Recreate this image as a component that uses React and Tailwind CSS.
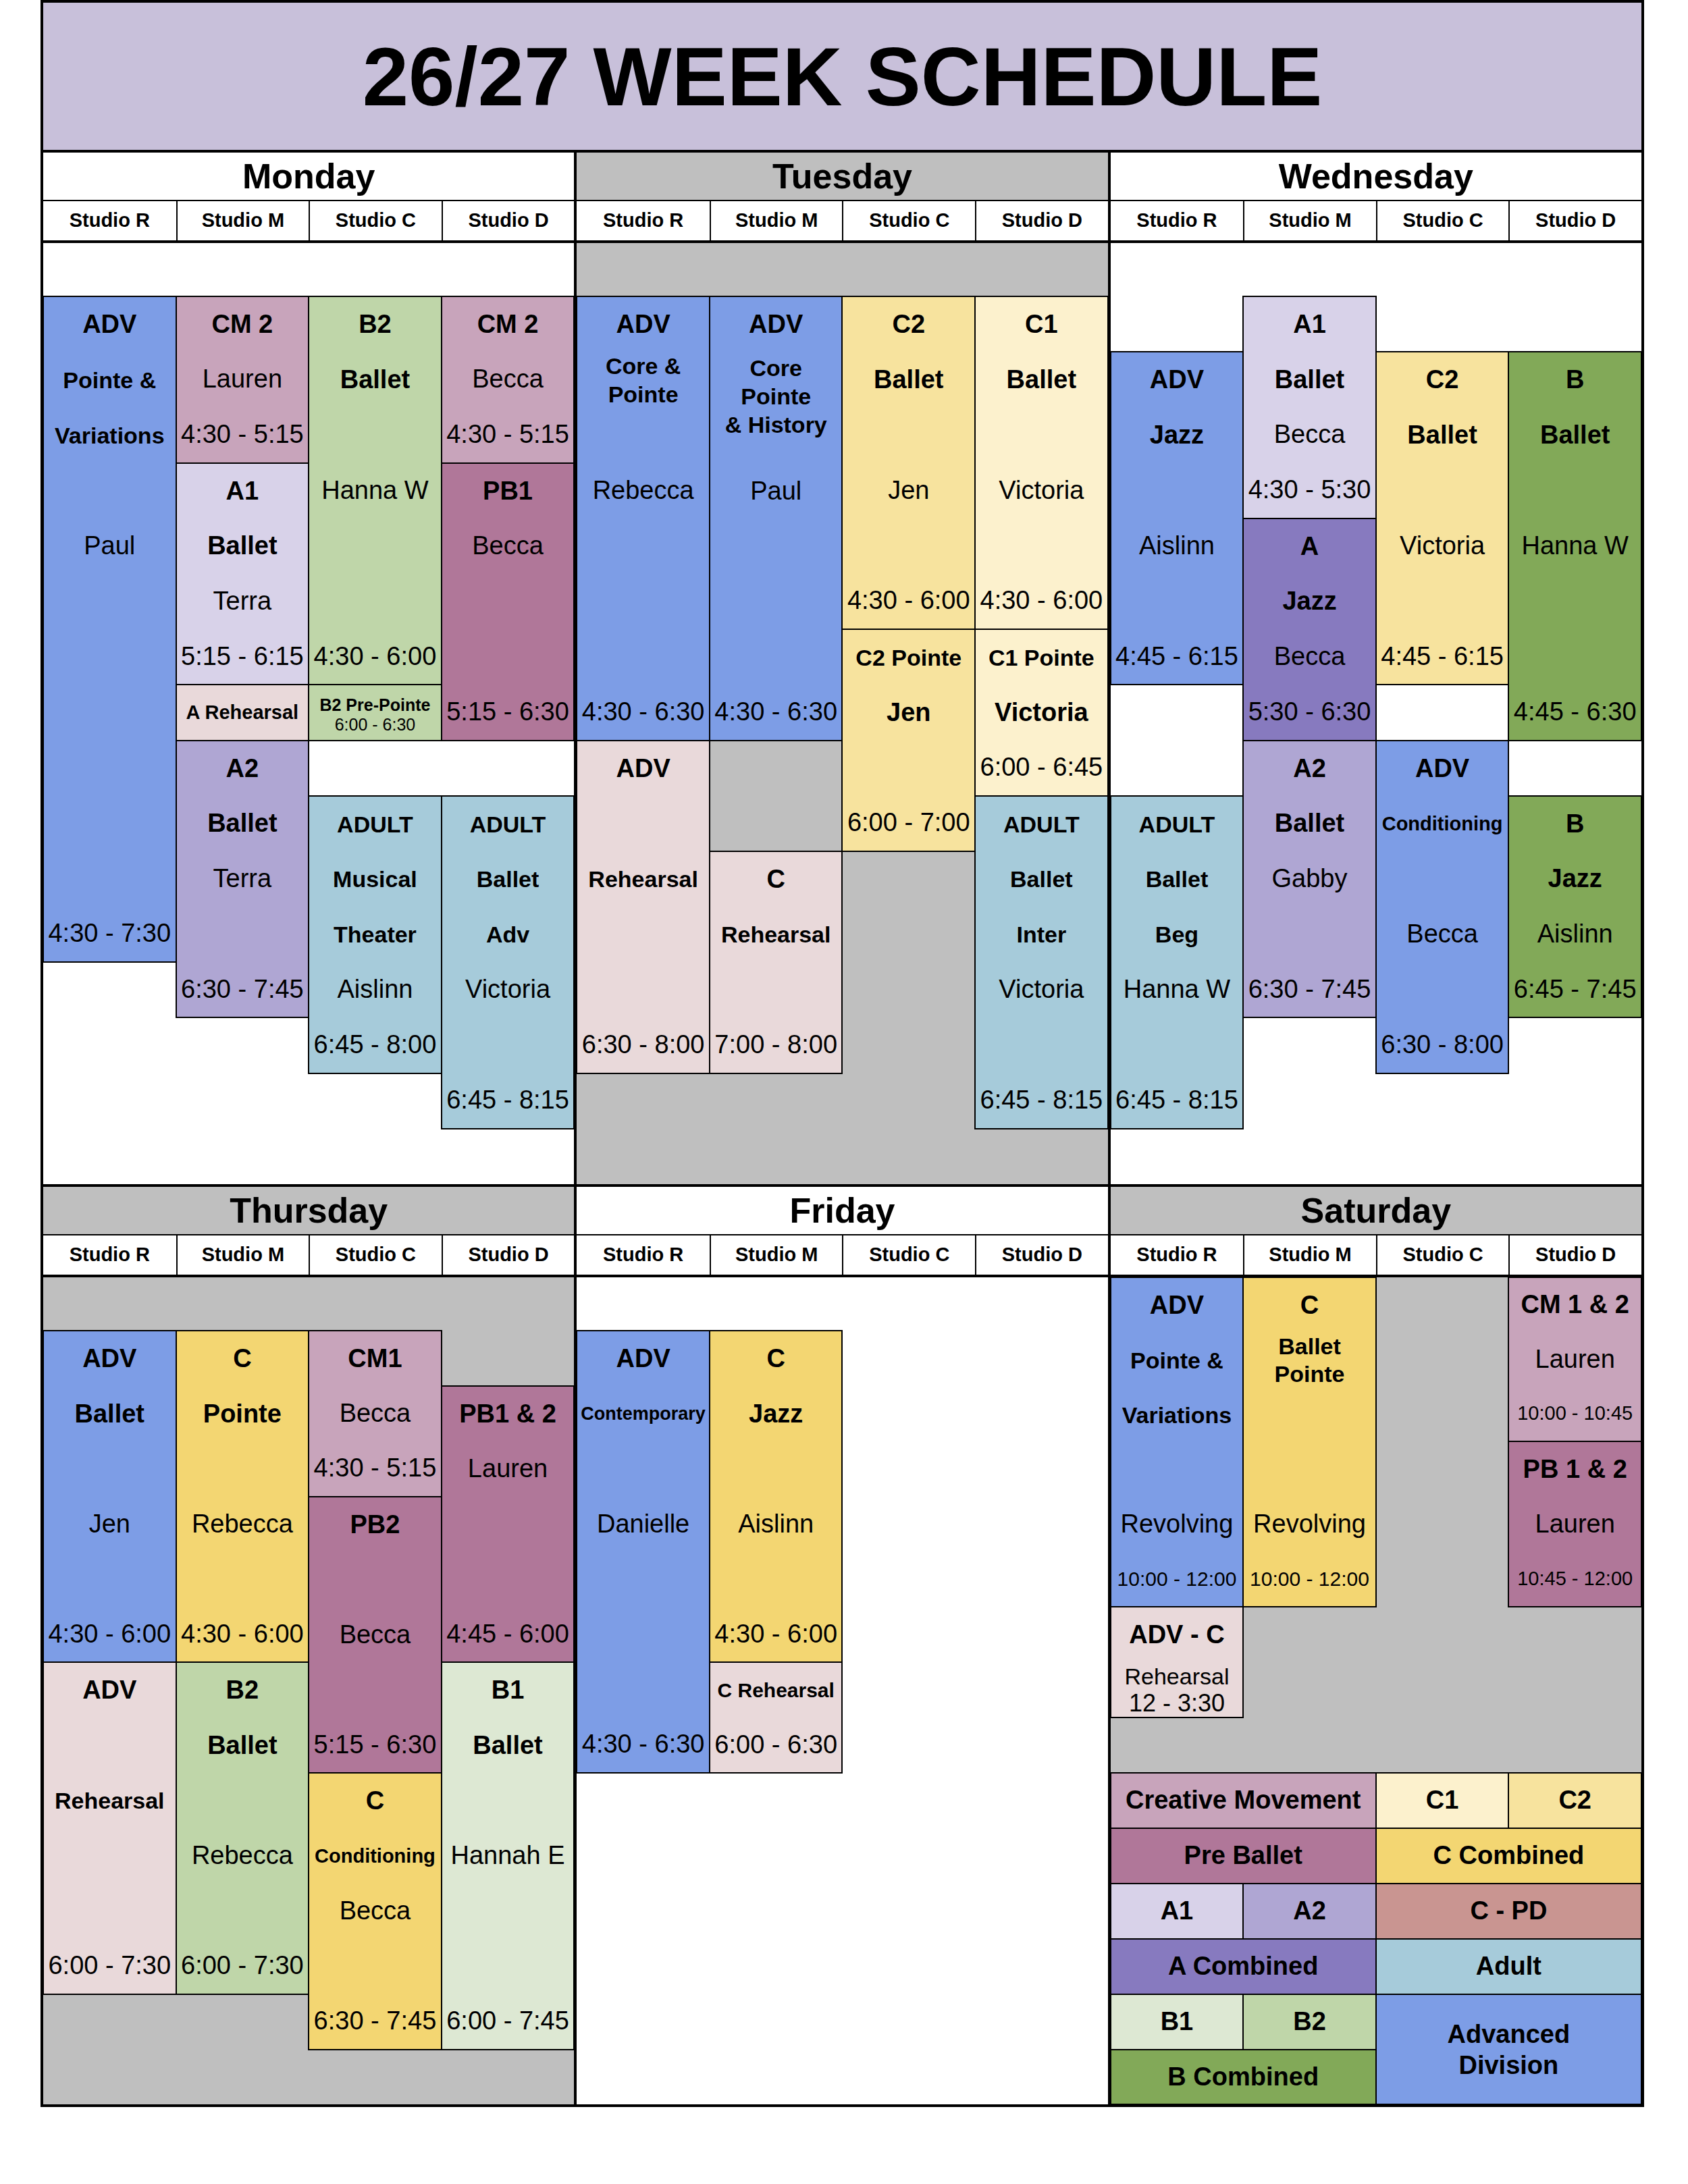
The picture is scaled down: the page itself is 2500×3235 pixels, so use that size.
// 26/27 week schedule, laid out like the spreadsheet it came from:
// every day is a 4-column grid, every grid row is one 15 minute slot.

const ADV = "bg-[#7d9de6]";
const CM = "bg-[#c8a4bb]";
const PB = "bg-[#b07799]";
const B1 = "bg-[#dde8d3]";
const B2 = "bg-[#bfd6a9]";
const BC = "bg-[#82a958]";
const A1 = "bg-[#d8d2e9]";
const A2 = "bg-[#afa6d3]";
const AC = "bg-[#877abf]";
const C1 = "bg-[#fcf1cd]";
const C2 = "bg-[#f7e39e]";
const CC = "bg-[#f3d672]";
const CPD = "bg-[#c99591]";
const AD = "bg-[#a6cbda]";
const RH = "bg-[#e9d9da]";

const GRAY = "bg-[#bfbfbf]";
const WHITE = "bg-white";

// line helpers
const b = (t) => ({ c: "text-[38px] font-bold", t });
const m = (t) => ({ c: "text-[34px] font-bold leading-[42px]", t });
const n = (t) => ({ c: "text-[38px]", t });
const tm = (t) => ({ c: "text-[38px] whitespace-nowrap", t });
const st = (t) => ({ c: "text-[30px] whitespace-nowrap", t });
const x = (c, t, w) => ({ c, t, w });
const _ = null;

const topDays = [
  {
    name: "Monday",
    head: WHITE,
    bg: WHITE,
    blocks: [
      { pos: "col-start-1 row-start-2 row-span-12", bg: ADV, lines: [b("ADV"), m("Pointe &"), m("Variations"), _, n("Paul"), _, _, _, _, _, _, tm("4:30 - 7:30")] },
      { pos: "col-start-2 row-start-2 row-span-3", bg: CM, lines: [b("CM 2"), n("Lauren"), tm("4:30 - 5:15")] },
      { pos: "col-start-2 row-start-5 row-span-4", bg: A1, lines: [b("A1"), b("Ballet"), n("Terra"), tm("5:15 - 6:15")] },
      { pos: "col-start-2 row-start-9 row-span-1", bg: RH, lines: [x("text-[29px] font-bold whitespace-nowrap", "A Rehearsal")] },
      { pos: "col-start-2 row-start-10 row-span-5", bg: A2, lines: [b("A2"), b("Ballet"), n("Terra"), _, tm("6:30 - 7:45")] },
      { pos: "col-start-3 row-start-2 row-span-7", bg: B2, lines: [b("B2"), b("Ballet"), _, n("Hanna W"), _, _, tm("4:30 - 6:00")] },
      {
        pos: "col-start-3 row-start-9 row-span-1",
        bg: B2,
        lines: [
          x(
            "pt-[6px]",
            <>
              <div className="text-[25px] font-bold leading-[30px] whitespace-nowrap">B2 Pre-Pointe</div>
              <div className="text-[25px] leading-[28px]">6:00 - 6:30</div>
            </>
          ),
        ],
      },
      { pos: "col-start-3 row-start-11 row-span-5", bg: AD, lines: [m("ADULT"), m("Musical"), m("Theater"), n("Aislinn"), tm("6:45 - 8:00")] },
      { pos: "col-start-4 row-start-2 row-span-3", bg: CM, lines: [b("CM 2"), n("Becca"), tm("4:30 - 5:15")] },
      { pos: "col-start-4 row-start-5 row-span-5", bg: PB, lines: [b("PB1"), n("Becca"), _, _, tm("5:15 - 6:30")] },
      { pos: "col-start-4 row-start-11 row-span-6", bg: AD, lines: [m("ADULT"), m("Ballet"), m("Adv"), n("Victoria"), _, tm("6:45 - 8:15")] },
    ],
  },
  {
    name: "Tuesday",
    head: GRAY,
    bg: GRAY,
    blocks: [
      {
        pos: "col-start-1 row-start-2 row-span-8",
        bg: ADV,
        lines: [b("ADV"), x("text-[34px] font-bold leading-[42px]", <>{"Core &"}<br />Pointe</>), _, n("Rebecca"), _, _, _, tm("4:30 - 6:30")],
      },
      { pos: "col-start-1 row-start-10 row-span-6", bg: RH, lines: [b("ADV"), _, m("Rehearsal"), _, _, tm("6:30 - 8:00")] },
      {
        pos: "col-start-2 row-start-2 row-span-8",
        bg: ADV,
        lines: [
          b("ADV"),
          x("text-[34px] font-bold leading-[42px] whitespace-nowrap", <>Core<br />Pointe<br />{"& History"}</>, "flex-[2] justify-start pt-[2px]"),
          n("Paul"),
          _,
          _,
          _,
          tm("4:30 - 6:30"),
        ],
      },
      { pos: "col-start-2 row-start-12 row-span-4", bg: RH, lines: [b("C"), m("Rehearsal"), _, tm("7:00 - 8:00")] },
      { pos: "col-start-3 row-start-2 row-span-6", bg: C2, lines: [b("C2"), b("Ballet"), _, n("Jen"), _, tm("4:30 - 6:00")] },
      { pos: "col-start-3 row-start-8 row-span-4", bg: C2, lines: [m("C2 Pointe"), b("Jen"), _, tm("6:00 - 7:00")] },
      { pos: "col-start-4 row-start-2 row-span-6", bg: C1, lines: [b("C1"), b("Ballet"), _, n("Victoria"), _, tm("4:30 - 6:00")] },
      { pos: "col-start-4 row-start-8 row-span-3", bg: C1, lines: [m("C1 Pointe"), b("Victoria"), tm("6:00 - 6:45")] },
      { pos: "col-start-4 row-start-11 row-span-6", bg: AD, lines: [m("ADULT"), m("Ballet"), m("Inter"), n("Victoria"), _, tm("6:45 - 8:15")] },
    ],
  },
  {
    name: "Wednesday",
    head: WHITE,
    bg: WHITE,
    blocks: [
      { pos: "col-start-1 row-start-3 row-span-6", bg: ADV, lines: [b("ADV"), b("Jazz"), _, n("Aislinn"), _, tm("4:45 - 6:15")] },
      { pos: "col-start-1 row-start-11 row-span-6", bg: AD, lines: [m("ADULT"), m("Ballet"), m("Beg"), n("Hanna W"), _, tm("6:45 - 8:15")] },
      { pos: "col-start-2 row-start-2 row-span-4", bg: A1, lines: [b("A1"), b("Ballet"), n("Becca"), tm("4:30 - 5:30")] },
      { pos: "col-start-2 row-start-6 row-span-4", bg: AC, lines: [b("A"), b("Jazz"), n("Becca"), tm("5:30 - 6:30")] },
      { pos: "col-start-2 row-start-10 row-span-5", bg: A2, lines: [b("A2"), b("Ballet"), n("Gabby"), _, tm("6:30 - 7:45")] },
      { pos: "col-start-3 row-start-3 row-span-6", bg: C2, lines: [b("C2"), b("Ballet"), _, n("Victoria"), _, tm("4:45 - 6:15")] },
      { pos: "col-start-3 row-start-10 row-span-6", bg: ADV, lines: [b("ADV"), x("text-[29px] font-bold whitespace-nowrap", "Conditioning"), _, n("Becca"), _, tm("6:30 - 8:00")] },
      { pos: "col-start-4 row-start-3 row-span-7", bg: BC, lines: [b("B"), b("Ballet"), _, n("Hanna W"), _, _, tm("4:45 - 6:30")] },
      { pos: "col-start-4 row-start-11 row-span-4", bg: BC, lines: [b("B"), b("Jazz"), n("Aislinn"), tm("6:45 - 7:45")] },
    ],
  },
];

const bottomDays = [
  {
    name: "Thursday",
    head: GRAY,
    bg: GRAY,
    blocks: [
      { pos: "col-start-1 row-start-2 row-span-6", bg: ADV, lines: [b("ADV"), b("Ballet"), _, n("Jen"), _, tm("4:30 - 6:00")] },
      { pos: "col-start-1 row-start-8 row-span-6", bg: RH, lines: [b("ADV"), _, m("Rehearsal"), _, _, tm("6:00 - 7:30")] },
      { pos: "col-start-2 row-start-2 row-span-6", bg: CC, lines: [b("C"), b("Pointe"), _, n("Rebecca"), _, tm("4:30 - 6:00")] },
      { pos: "col-start-2 row-start-8 row-span-6", bg: B2, lines: [b("B2"), b("Ballet"), _, n("Rebecca"), _, tm("6:00 - 7:30")] },
      { pos: "col-start-3 row-start-2 row-span-3", bg: CM, lines: [b("CM1"), n("Becca"), tm("4:30 - 5:15")] },
      { pos: "col-start-3 row-start-5 row-span-5", bg: PB, lines: [b("PB2"), _, n("Becca"), _, tm("5:15 - 6:30")] },
      { pos: "col-start-3 row-start-10 row-span-5", bg: CC, lines: [b("C"), x("text-[29px] font-bold whitespace-nowrap", "Conditioning"), n("Becca"), _, tm("6:30 - 7:45")] },
      { pos: "col-start-4 row-start-3 row-span-5", bg: PB, lines: [b("PB1 & 2"), n("Lauren"), _, _, tm("4:45 - 6:00")] },
      { pos: "col-start-4 row-start-8 row-span-7", bg: B1, lines: [b("B1"), b("Ballet"), _, n("Hannah E"), _, _, tm("6:00 - 7:45")] },
    ],
  },
  {
    name: "Friday",
    head: WHITE,
    bg: WHITE,
    blocks: [
      { pos: "col-start-1 row-start-2 row-span-8", bg: ADV, lines: [b("ADV"), x("text-[27px] font-bold whitespace-nowrap", "Contemporary"), _, n("Danielle"), _, _, _, tm("4:30 - 6:30")] },
      { pos: "col-start-2 row-start-2 row-span-6", bg: CC, lines: [b("C"), b("Jazz"), _, n("Aislinn"), _, tm("4:30 - 6:00")] },
      { pos: "col-start-2 row-start-8 row-span-2", bg: RH, lines: [x("text-[30px] font-bold whitespace-nowrap", "C Rehearsal"), tm("6:00 - 6:30")] },
    ],
  },
  {
    name: "Saturday",
    head: GRAY,
    bg: GRAY,
    blocks: [
      { pos: "col-start-1 row-start-1 row-span-6", bg: ADV, lines: [b("ADV"), m("Pointe &"), m("Variations"), _, n("Revolving"), st("10:00 - 12:00")] },
      {
        pos: "col-start-1 row-start-7 row-span-2",
        bg: RH,
        lines: [
          b("ADV - C"),
          x(
            "",
            <>
              <div className="text-[34px] leading-[40px]">Rehearsal</div>
              <div className="text-[36px] leading-[40px]">12 - 3:30</div>
            </>
          ),
        ],
      },
      {
        pos: "col-start-2 row-start-1 row-span-6",
        bg: CC,
        lines: [b("C"), x("text-[34px] font-bold leading-[41px]", <>Ballet<br />Pointe</>), _, _, n("Revolving"), st("10:00 - 12:00")],
      },
      { pos: "col-start-4 row-start-1 row-span-3", bg: CM, lines: [b("CM 1 & 2"), n("Lauren"), x("text-[29px] whitespace-nowrap", "10:00 - 10:45")] },
      { pos: "col-start-4 row-start-4 row-span-3", bg: PB, lines: [b("PB 1 & 2"), n("Lauren"), x("text-[29px] whitespace-nowrap", "10:45 - 12:00")] },

      // legend
      { pos: "col-start-1 col-span-2 row-start-10", bg: CM, lines: [b("Creative Movement")] },
      { pos: "col-start-3 row-start-10", bg: C1, lines: [b("C1")] },
      { pos: "col-start-4 row-start-10", bg: C2, lines: [b("C2")] },
      { pos: "col-start-1 col-span-2 row-start-11", bg: PB, lines: [b("Pre Ballet")] },
      { pos: "col-start-3 col-span-2 row-start-11", bg: CC, lines: [b("C Combined")] },
      { pos: "col-start-1 row-start-12", bg: A1, lines: [b("A1")] },
      { pos: "col-start-2 row-start-12", bg: A2, lines: [b("A2")] },
      { pos: "col-start-3 col-span-2 row-start-12", bg: CPD, lines: [b("C - PD")] },
      { pos: "col-start-1 col-span-2 row-start-13", bg: AC, lines: [b("A Combined")] },
      { pos: "col-start-3 col-span-2 row-start-13", bg: AD, lines: [b("Adult")] },
      { pos: "col-start-1 row-start-14", bg: B1, lines: [b("B1")] },
      { pos: "col-start-2 row-start-14", bg: B2, lines: [b("B2")] },
      {
        pos: "col-start-3 col-span-2 row-start-14 row-span-2",
        bg: ADV,
        lines: [x("text-[38px] font-bold leading-[46px]", <>Advanced<br />Division</>)],
      },
      { pos: "col-start-1 col-span-2 row-start-15", bg: BC, lines: [b("B Combined")] },
    ],
  },
];

const studios = ["Studio R", "Studio M", "Studio C", "Studio D"];

function Block({ block }) {
  return (
    <div className={`-m-px border-2 border-black flex flex-col ${block.pos} ${block.bg}`}>
      {block.lines.map((l, i) => (
        <div
          key={i}
          className={`basis-0 min-h-0 flex flex-col items-center text-center ${l && l.w ? l.w : "flex-1 justify-center"}`}
        >
          {l && <div className={`leading-[1.15] ${l.c}`}>{l.t}</div>}
        </div>
      ))}
    </div>
  );
}

function Day({ day, rows }) {
  return (
    <div className="flex flex-col">
      <div className={`h-[72px] border-b-2 border-black flex items-center justify-center text-[52px] font-bold leading-none ${day.head}`}>
        {day.name}
      </div>
      <div className="h-[62px] grid grid-cols-4 border-b-4 border-black bg-white">
        {studios.map((s, i) => (
          <div
            key={s}
            className={`flex items-center justify-center text-[29px] font-bold ${i > 0 ? "border-l-2 border-black" : ""}`}
          >
            {s}
          </div>
        ))}
      </div>
      <div className={`grid grid-cols-4 ${rows} ${day.bg}`}>
        {day.blocks.map((bl, i) => (
          <Block key={i} block={bl} />
        ))}
      </div>
    </div>
  );
}

export default function App() {
  return (
    <div className="bg-white min-h-[3235px] font-['Liberation_Sans',Arial,sans-serif] text-black">
      <div className="ml-[60px] w-[2375px] border-4 border-black bg-black flex flex-col gap-1">
        <div className="h-[218px] bg-[#c8c0da] flex items-center justify-center">
          <h1 className="text-[123px] font-bold leading-none">26/27 WEEK SCHEDULE</h1>
        </div>
        <div className="grid grid-cols-3 gap-x-1">
          {topDays.map((d) => (
            <Day key={d.name} day={d} rows="grid-rows-[79px_repeat(16,82.2px)]" />
          ))}
        </div>
        <div className="grid grid-cols-3 gap-x-1">
          {bottomDays.map((d) => (
            <Day key={d.name} day={d} rows="grid-rows-[79px_repeat(14,81.9px)]" />
          ))}
        </div>
      </div>
    </div>
  );
}
